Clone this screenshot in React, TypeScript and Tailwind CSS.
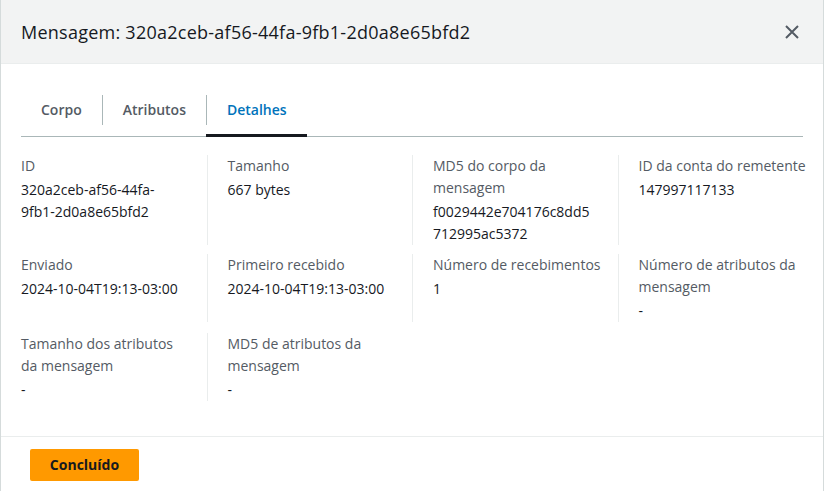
import React from 'react';

type Field = {
  label: string;
  value: string[];
};

const rows: Field[][] = [
  [
    { label: 'ID', value: ['320a2ceb-af56-44fa-', '9fb1-2d0a8e65bfd2'] },
    { label: 'Tamanho', value: ['667 bytes'] },
    { label: 'MD5 do corpo da mensagem', value: ['f0029442e704176c8dd5', '712995ac5372'] },
    { label: 'ID da conta do remetente', value: ['147997117133'] },
  ],
  [
    { label: 'Enviado', value: ['2024-10-04T19:13-03:00'] },
    { label: 'Primeiro recebido', value: ['2024-10-04T19:13-03:00'] },
    { label: 'Número de recebimentos', value: ['1'] },
    { label: 'Número de atributos da mensagem', value: ['-'] },
  ],
  [
    { label: 'Tamanho dos atributos da mensagem', value: ['-'] },
    { label: 'MD5 de atributos da mensagem', value: ['-'] },
  ],
];

const tabs = ['Corpo', 'Atributos', 'Detalhes'];

// first column keeps a wider right gutter so its long label wraps like the console does
const Cell: React.FC<{ field: Field; first: boolean }> = ({ field, first }) => (
  <div className={first ? 'pl-5 pr-5' : 'pl-5 pr-2 border-l border-[#eaeded]'}>
    <div className="text-[#545b64]">{field.label}</div>
    <div className="mt-[2px] text-[#16191f]">
      {field.value.map(line => (
        <div key={line}>{line}</div>
      ))}
    </div>
  </div>
);

export default function App() {
  return (
    <div
      className="w-[824px] h-[491px] bg-white flex flex-col border-l border-r border-[#d5dbdb] overflow-hidden text-[14px] leading-[22px]"
      style={{ fontFamily: '"Open Sans", "Noto Sans", sans-serif' }}
    >
      <div className="h-[64px] shrink-0 bg-[#f2f3f3] border-b border-[#eaeded] flex items-center justify-between pl-5 pr-[24px]">
        <h1 className="text-[18px] text-[#16191f] font-medium tracking-[0.25px]">
          Mensagem: 320a2ceb-af56-44fa-9fb1-2d0a8e65bfd2
        </h1>
        <svg width="14" height="14" viewBox="0 0 14 14" className="text-[#545b64]">
          <path d="M1 1 L13 13 M13 1 L1 13" stroke="currentColor" strokeWidth="2" fill="none" />
        </svg>
      </div>

      <div className="flex-1 pt-[19px]">
        <div className="mx-5 flex border-b border-[#aab7b8] h-[54px]">
          {tabs.map((tab, i) => (
            <div
              key={tab}
              className={`relative flex items-center ${i === 2 ? 'text-[#0073bb]' : 'text-[#545b64]'} font-semibold`}
            >
              {i > 0 && <span className="h-[30px] w-px bg-[#aab7b8]" />}
              <span className="px-[20px]">{tab}</span>
              {i === 2 && <span className="absolute left-0 right-0 bottom-[-1px] h-[3px] bg-[#16191f]" />}
            </div>
          ))}
        </div>

        <div className="mt-[18px] flex flex-col">
          {rows.map((row, r) => (
            <div key={r} className={`grid grid-cols-4 ${r === 1 ? 'mt-[9px]' : r === 2 ? 'mt-[11px]' : ''}`}>
              {row.map((field, c) => (
                <Cell key={field.label} field={field} first={c === 0} />
              ))}
            </div>
          ))}
        </div>
      </div>

      <div className="h-[55px] shrink-0 border-t border-[#eaeded] pl-[29px] pt-[12px]">
        <button className="h-[32px] w-[109px] rounded-[2px] bg-[#ff9900] text-[#16191f] font-bold">
          Concluído
        </button>
      </div>
    </div>
  );
}
